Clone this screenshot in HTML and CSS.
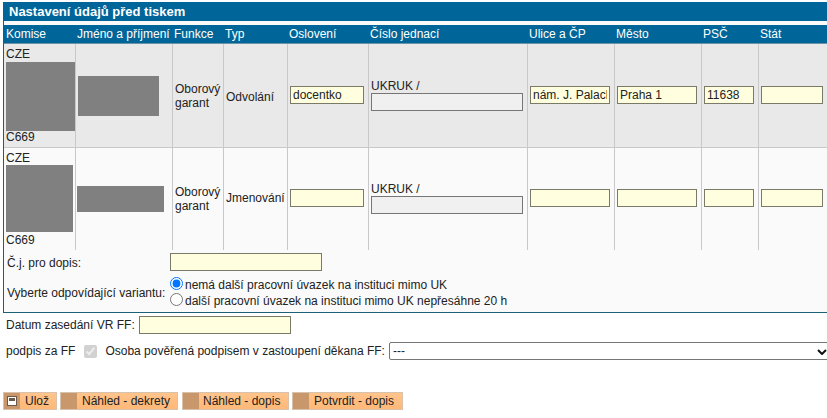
FILE: index.html
```html
<!DOCTYPE html>
<html lang="cs">
<head>
<meta charset="utf-8">
<title>Nastavení údajů před tiskem</title>
<link rel="stylesheet" href="styles.css">
</head>
<body>
<section class="panel">
  <h1 class="title">Nastavení údajů před tiskem</h1>
  <table class="grid">
    <colgroup>
      <col class="c1"><col class="c2"><col class="c3"><col class="c4"><col class="c5"><col class="c6"><col class="c7"><col class="c8"><col class="c9"><col class="c10">
    </colgroup>
    <thead>
      <tr><th>Komise</th><th>Jméno a příjmení</th><th>Funkce</th><th>Typ</th><th>Oslovení</th><th>Číslo jednací</th><th>Ulice a ČP</th><th>Město</th><th>PSČ</th><th>Stát</th></tr>
    </thead>
    <tbody>
      <tr class="row-a">
        <td class="komise">CZE<div class="redact r1"></div>C669</td>
        <td><div class="redact n1"></div></td>
        <td class="fn">Oborový garant</td>
        <td class="typ">Odvolání</td>
        <td class="ctl"><input class="field w-osl" type="text" value="docentko"></td>
        <td class="cj">UKRUK /<input class="field off" type="text" disabled></td>
        <td class="ctl"><input class="field w-ul" type="text" value="nám. J. Palach"></td>
        <td class="ctl"><input class="field w-ul" type="text" value="Praha 1"></td>
        <td class="ctl"><input class="field w-psc" type="text" value="11638"></td>
        <td class="ctl"><input class="field w-st" type="text"></td>
      </tr>
      <tr class="row-b">
        <td class="komise">CZE<div class="redact r2"></div>C669</td>
        <td><div class="redact n2"></div></td>
        <td class="fn">Oborový garant</td>
        <td class="typ">Jmenování</td>
        <td class="ctl"><input class="field w-osl" type="text"></td>
        <td class="cj">UKRUK /<input class="field off" type="text" disabled></td>
        <td class="ctl"><input class="field w-ul" type="text"></td>
        <td class="ctl"><input class="field w-ul" type="text"></td>
        <td class="ctl"><input class="field w-psc" type="text"></td>
        <td class="ctl"><input class="field w-st" type="text"></td>
      </tr>
    </tbody>
  </table>
  <div class="extra">
    <label class="lab lab-cj" for="cj">Č.j. pro dopis:</label>
    <input class="field w-long" id="cj" type="text">
    <span class="lab lab-var">Vyberte odpovídající variantu:</span>
    <div class="radios">
      <label class="radio"><input type="radio" name="v" checked>nemá další pracovní úvazek na instituci mimo UK</label>
      <label class="radio"><input type="radio" name="v">další pracovní úvazek na instituci mimo UK nepřesáhne 20 h</label>
    </div>
  </div>
</section>
<div class="line datum">
  <label for="dat">Datum zasedání VR FF:</label>
  <input class="field w-long" id="dat" type="text">
</div>
<div class="line podpis">
  <span>podpis za FF</span>
  <input class="check" type="checkbox" checked disabled>
  <label for="os">Osoba pověřená podpisem v zastoupení děkana FF:</label>
  <select class="osoba" id="os"><option>---</option></select>
</div>
<div class="buttons">
  <button class="btn" type="button"><span class="strip"><svg width="10" height="10" viewBox="0 0 10 10"><rect x="0.5" y="0.5" width="9" height="9" fill="#fff" stroke="#6b5a4a"/><rect x="2" y="2" width="6" height="3" fill="#6b5a4a"/></svg></span><span class="cap cap-u">Ulož</span></button>
  <button class="btn" type="button"><span class="strip"></span><span class="cap cap-1">Náhled - dekrety</span></button>
  <button class="btn btn-2" type="button"><span class="strip"></span><span class="cap cap-2">Náhled - dopis</span></button>
  <button class="btn" type="button"><span class="strip"></span><span class="cap cap-3">Potvrdit - dopis</span></button>
</div>
</body>
</html>
```
FILE: styles.css
```css
* { box-sizing: border-box; }
html, body { margin: 0; padding: 0; background: #fff; overflow: hidden; }
body { font: 12px/14px "Liberation Sans", Arial, sans-serif; color: #222; height: 418px; }

.panel { margin: 2px 0 0 3px; border-left: 1px solid #006699; border-bottom: 1px solid #1c6077; background: #fafafa; height: 311px; }
.title { margin: 0 0 0 -1px; height: 19px; background: #006699; color: #fff; font-size: 13px; line-height: 19px; font-weight: bold; padding-left: 6px; }

.grid { border-collapse: separate; border-spacing: 0; table-layout: fixed; width: 823px; margin-top: 4px; }
.c1 { width: 72px; } .c2 { width: 97px; } .c3 { width: 51px; } .c4 { width: 64px; } .c5 { width: 81px; }
.c6 { width: 159px; } .c7 { width: 87px; } .c8 { width: 87px; } .c9 { width: 57px; } .c10 { width: 68px; }

.grid th { height: 19px; padding: 0 0 1px 1px; background: #006699; color: #fff; font-weight: normal; text-align: left; white-space: nowrap; overflow: hidden; border-bottom: 1px solid #6a93a8; }
.grid th:first-child { padding-left: 2px; }
.grid td { padding: 0 0 0 2px; border-right: 1px solid #c8c8c8; vertical-align: middle; }
.grid td:last-child { border-right: 0; }
.row-a td { height: 104px; background: #e9e9e9; border-bottom: 1px solid #c8c8c8; }
.row-b td { height: 102px; background: #fafafa; }
.grid .row-a .ctl { padding-bottom: 2px; }
.grid .row-b .ctl { padding-bottom: 3px; }
.grid .row-a .cj { padding-bottom: 1px; }
.grid .row-b .cj { padding-bottom: 2px; }
.grid .row-a .typ { padding-top: 2px; }
.grid .row-b .typ { padding-bottom: 2px; }
.grid .row-a .fn { padding-top: 1px; }

.komise { padding-left: 2px; }
.redact { background: #808080; }
.r1 { width: 69px; height: 69px; margin: 1px 0 -1px; }
.r2 { width: 67px; height: 67px; margin-bottom: 1px; }
.n1 { width: 81px; height: 40px; }
.n2 { width: 87px; height: 26px; margin-left: -1px; }

.field { display: block; height: 18px; margin: 0; padding: 0 2px; border: 1px solid #7a7a68; background: #ffffe0; font: 12px "Liberation Sans", Arial, sans-serif; color: #222; border-radius: 0; }
.off { width: 152px; background: #f0f0f0; border-color: #767676; }
.w-osl { width: 74px; }
.w-ul { width: 80px; }
.w-psc { width: 50px; }
.w-st { width: 62px; }
.w-long { width: 152px; }

.extra { display: grid; grid-template-columns: 166px 1fr; align-items: center; padding-top: 3px; }
.lab { padding-left: 3px; }
.lab-cj { padding-top: 1px; }
.lab-var { padding-top: 6px; }
.radios { display: flex; flex-direction: column; padding-top: 6px; }
.radio { display: flex; align-items: center; height: 16px; line-height: 16px; white-space: nowrap; }
.radio input { width: 13px; height: 13px; margin: 0 2px 3px 0; }

.line { display: flex; align-items: center; padding-left: 6px; white-space: nowrap; }
.line > * { flex: none; }
.datum { margin-top: 3px; height: 18px; }
.datum label { margin-right: 4px; }
.podpis { margin-top: 8px; height: 18px; }
.check { width: 13px; height: 13px; margin: 0 8px 0 9px; }
.osoba { appearance: none; width: 445px; height: 18px; margin-left: 4px; padding: 0 0 0 3px; font: 12px "Liberation Sans", Arial, sans-serif; background: #fff url("data:image/svg+xml,%3Csvg xmlns='http://www.w3.org/2000/svg' width='10' height='6'%3E%3Cpath d='M1 1l4 4 4-4' fill='none' stroke='%23111' stroke-width='2'/%3E%3C/svg%3E") no-repeat 427px 6px; border: 1px solid #767676; border-radius: 2px; color: #222; }

.buttons { display: flex; gap: 3px; margin-top: 32px; padding-left: 3px; }
.btn { display: flex; align-items: stretch; height: 18px; padding: 0; border: 1px solid #d9c2ac; background: #ffbf80; font: 12px/16px "Liberation Sans", Arial, sans-serif; color: #222; cursor: pointer; }
.btn-2 { margin-left: 1px; }
.strip { display: flex; align-items: center; justify-content: center; width: 16px; background: #c8976c; flex: none; }
.cap { display: block; background: linear-gradient(#ffc48c, #ffb877); text-align: left; white-space: nowrap; }
.cap-u { width: 36px; padding-left: 5px; }
.cap-1 { width: 100px; padding-left: 5px; }
.cap-2 { width: 89px; padding-left: 4px; }
.cap-3 { width: 93px; padding-left: 5px; }
```
